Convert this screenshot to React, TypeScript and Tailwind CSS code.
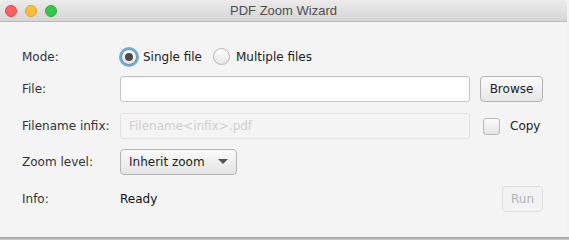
import React from "react";

const font = { fontFamily: '"DejaVu Sans", "Liberation Sans", sans-serif' };

function Radio({ checked }: { checked?: boolean }) {
  if (checked) {
    return (
      <span className="flex h-[20px] w-[20px] items-center justify-center rounded-full bg-[#6aaee6]">
        <span className="flex h-[16px] w-[16px] items-center justify-center rounded-full border border-[#8b8b8b] bg-gradient-to-b from-[#ffffff] to-[#e3e3e3]">
          <span className="h-[8px] w-[8px] rounded-full bg-[#4a4a4a]" />
        </span>
      </span>
    );
  }
  return (
    <span className="flex h-[20px] w-[20px] items-center justify-center">
      <span className="h-[17px] w-[17px] rounded-full border border-[#b5b5b5] bg-gradient-to-b from-[#fdfdfd] to-[#e6e6e6]" />
    </span>
  );
}

export default function App() {
  return (
    <div className="h-[240px] w-[569px] overflow-hidden bg-[#f2f2f2]" style={font}>
      <div className="flex h-[237px] w-[567px] flex-col overflow-hidden rounded-t-[5px] bg-[#f4f4f4]">
        <div className="relative flex h-[22px] shrink-0 items-center border-b border-[#b9b9b9] bg-gradient-to-b from-[#ebebeb] to-[#d5d5d5]">
          <div className="flex items-center gap-[8px] pl-[5px]">
            <span className="h-[12px] w-[12px] rounded-full border border-[#e2463f] bg-[#fc605c]" />
            <span className="h-[12px] w-[12px] rounded-full border border-[#e1a116] bg-[#fdbc40]" />
            <span className="h-[12px] w-[12px] rounded-full border border-[#2aac32] bg-[#34c84a]" />
          </div>
          <div className="absolute inset-0 flex items-center justify-center text-[13px] text-[#4d4d4d]" style={{ fontFamily: '"Liberation Sans", sans-serif' }}>
            PDF Zoom Wizard
          </div>
        </div>

        <div className="flex flex-col pl-[22px] pt-[24px] text-[12px] text-[#333333]">
          {/* Mode */}
          <div className="flex h-[21px] items-center">
            <div className="w-[97px]">Mode:</div>
            <div className="flex items-center">
              <Radio checked />
              <span className="ml-[4px] text-[#222]">Single file</span>
              <span className="ml-[10px]">
                <Radio />
              </span>
              <span className="ml-[4px] text-[#222]">Multiple files</span>
            </div>
          </div>

          {/* File */}
          <div className="mt-[9px] flex h-[26px] items-center">
            <div className="w-[98px]">File:</div>
            <div className="h-[26px] w-[350px] rounded-[3px] border border-[#c4c4c4] bg-white shadow-[inset_0_1px_1px_rgba(0,0,0,0.06)]" />
            <button className="ml-[10px] h-[26px] w-[63px] rounded-[4px] border border-[#b4b4b4] bg-gradient-to-b from-[#fafafa] to-[#e6e6e6] text-[12px] text-[#222]">
              Browse
            </button>
          </div>

          {/* Filename infix */}
          <div className="mt-[11px] flex h-[26px] items-center">
            <div className="w-[98px]">Filename infix:</div>
            <div className="flex h-[26px] w-[350px] items-center rounded-[3px] border border-[#e2e2e2] bg-[#f4f4f4] pl-[8px] text-[#cfcfcf]">
              Filename&lt;infix&gt;.pdf
            </div>
            <span className="ml-[13px] h-[17px] w-[17px] rounded-[3px] border border-[#b8b8b8] bg-gradient-to-b from-[#fbfbfb] to-[#e4e4e4]" />
            <span className="ml-[10px] text-[#222]">Copy</span>
          </div>

          {/* Zoom level */}
          <div className="mt-[10px] flex h-[26px] items-center">
            <div className="w-[98px]">Zoom level:</div>
            <div className="flex h-[26px] w-[117px] items-center justify-between rounded-[4px] border border-[#b4b4b4] bg-gradient-to-b from-[#fafafa] to-[#e4e4e4] pl-[8px] pr-[8px] text-[#222]">
              <span>Inherit zoom</span>
              <svg width="10" height="6" viewBox="0 0 10 6">
                <path d="M0 0 L10 0 L5 5 Z" fill="#555" />
              </svg>
            </div>
          </div>

          {/* Info */}
          <div className="mt-[11px] flex h-[26px] items-center">
            <div className="w-[98px]">Info:</div>
            <div className="text-[#111]">Ready</div>
            <button className="ml-auto mr-[24px] h-[26px] w-[41px] rounded-[4px] border border-[#dedede] bg-[#f2f2f2] text-[12px] text-[#b4b4b4]">
              Run
            </button>
          </div>
        </div>
      </div>
      <div className="h-[3px] w-full bg-gradient-to-b from-[#9a9a9a] to-[#cfcfcf]" />
    </div>
  );
}
